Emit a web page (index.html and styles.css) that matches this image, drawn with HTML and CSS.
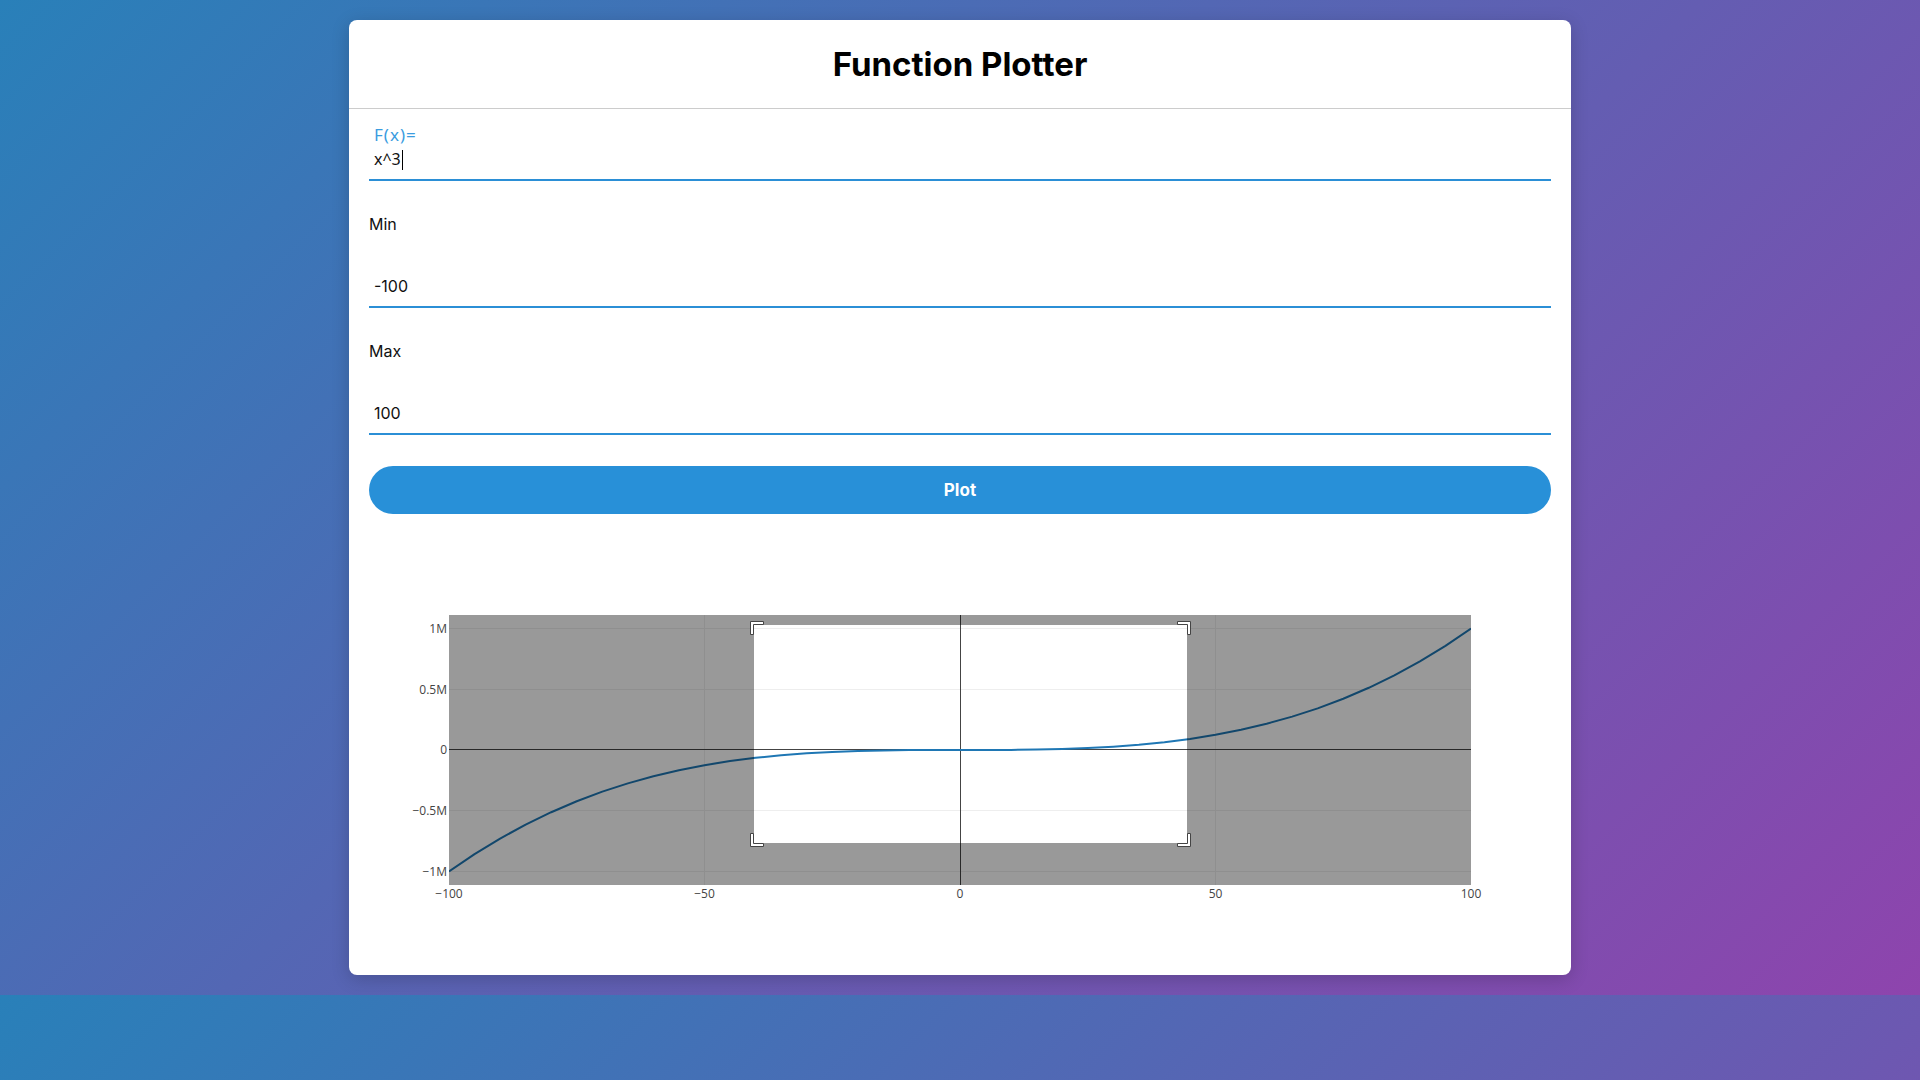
FILE: index.html
```html
<!DOCTYPE html>
<html lang="en">
<head>
<meta charset="utf-8">
<title>Function Plotter</title>
<link rel="stylesheet" href="styles.css">
</head>
<body>
<main class="card">
  <header class="card-header">
    <h1 class="title">Function Plotter</h1>
  </header>
  <section class="card-body">
    <div class="math-field">
      <div class="math-label">F(x)=</div>
      <div class="math-input">x^3<span class="caret"></span></div>
    </div>
    <div class="field">
      <label class="field-label" for="min">Min</label>
      <input class="field-input" id="min" type="text" value="-100">
    </div>
    <div class="field">
      <label class="field-label" for="max">Max</label>
      <input class="field-input" id="max" type="text" value="100">
    </div>
    <button class="plot-btn" type="button">Plot</button>
    <div class="chart">
      <svg class="plot" width="1182" height="450" viewBox="0 0 1182 450">
        <defs>
          <clipPath id="plotclip"><rect x="80" y="100" width="1022" height="270"/></clipPath>
        </defs>
        <rect x="80" y="100" width="1022" height="270" fill="#fff"/>
        <g class="grid" stroke="#eee" stroke-width="1" shape-rendering="crispEdges">
          <line x1="80" y1="113.5" x2="1102" y2="113.5"/>
          <line x1="80" y1="174.5" x2="1102" y2="174.5"/>
          <line x1="80" y1="295.5" x2="1102" y2="295.5"/>
          <line x1="80" y1="356.5" x2="1102" y2="356.5"/>
          <line x1="335.5" y1="100" x2="335.5" y2="370"/>
          <line x1="846.5" y1="100" x2="846.5" y2="370"/>
        </g>
        <g class="zero" stroke="#444" stroke-width="1" shape-rendering="crispEdges">
          <line x1="80" y1="234.5" x2="1102" y2="234.5"/>
          <line x1="591.5" y1="100" x2="591.5" y2="370"/>
        </g>
        <polyline clip-path="url(#plotclip)" fill="none" stroke="#1f77b4" stroke-width="2" stroke-linejoin="round"
          points="80,356.5 105.55,339.17 131.1,323.57 156.65,309.62 182.2,297.21 207.75,286.26 233.3,276.67 258.85,268.37 284.4,261.24 309.95,255.21 335.5,250.19 361.05,246.07 386.6,242.78 412.15,240.21 437.7,238.28 463.25,236.9 488.8,235.97 514.35,235.41 539.9,235.12 565.45,235.02 591,235 616.55,234.98 642.1,234.88 667.65,234.59 693.2,234.03 718.75,233.1 744.3,231.72 769.85,229.79 795.4,227.22 820.95,223.93 846.5,219.81 872.05,214.79 897.6,208.76 923.15,201.63 948.7,193.33 974.25,183.74 999.8,172.79 1025.35,160.38 1050.9,146.43 1076.45,130.83 1102,113.5"/>
        <path class="zoom-dim" fill="#000" fill-opacity="0.4" fill-rule="evenodd"
          d="M80,100H1102V370H80Z M385,110V328H818V110Z"/>
        <path class="zoom-corners" fill="#fff" stroke="#444" stroke-width="1"
          d="M381.5,119.5h3v-10h10v-3h-13Z M821.5,119.5h-3v-10h-10v-3h13Z M821.5,318.5h-3v10h-10v3h13Z M381.5,318.5h3v10h10v3h-13Z"/>
        <g class="ticks-y" font-family="'Open Sans', sans-serif" font-size="12" fill="#444" text-anchor="end">
          <text x="78" y="117.5">1M</text>
          <text x="78" y="178.5">0.5M</text>
          <text x="78" y="239">0</text>
          <text x="78" y="299.5">−0.5M</text>
          <text x="78" y="360.5">−1M</text>
        </g>
        <g class="ticks-x" font-family="'Open Sans', sans-serif" font-size="12" fill="#444" text-anchor="middle">
          <text x="80" y="383">−100</text>
          <text x="335.5" y="383">−50</text>
          <text x="591" y="383">0</text>
          <text x="846.5" y="383">50</text>
          <text x="1102" y="383">100</text>
        </g>
      </svg>
    </div>
  </section>
</main>
</body>
</html>
```

FILE: styles.css
```css
body {
  margin: 0;
  padding: 20px;
  background: linear-gradient(135deg, #2980b9, #8e44ad);
  font-family: "Inter", "Noto Sans", sans-serif;
  color: #111;
}

.card {
  width: 1222px;
  margin: 0 auto;
  background: #fff;
  border-radius: 8px;
  box-shadow: 0 4px 18px rgba(0, 0, 0, 0.18);
}

.card-header {
  padding: 20px;
  border-bottom: 1px solid #cccccc;
  text-align: center;
}

.title {
  margin: 0;
  font-size: 33px;
  line-height: 48px;
  font-weight: 700;
  color: #000;
}

.card-body {
  padding: 0 20px 10px;
}

.math-field {
  margin-top: 14px;
  padding: 0 5px 8px;
  border-bottom: 2px solid #2b8fd6;
  font-family: "Noto Sans", "Open Sans", sans-serif;
  font-size: 16px;
  line-height: 24px;
}

.math-label {
  color: #3a9ce0;
  font-size: 17px;
  letter-spacing: 1px;
}

.math-input {
  color: #111;
}

.caret {
  display: inline-block;
  width: 1px;
  height: 20px;
  margin-left: 1px;
  background: #000;
  vertical-align: -5px;
}

.field {
  margin-top: 31px;
}

.field-label {
  display: block;
  font-size: 16px;
  line-height: 24px;
  color: #111;
}

.field-input {
  display: block;
  width: 100%;
  box-sizing: border-box;
  margin-top: 28px;
  padding: 10px 5px 8px;
  border: none;
  border-bottom: 2px solid #2b8fd6;
  background: transparent;
  font-family: "Inter", "Noto Sans", sans-serif;
  font-size: 16px;
  line-height: 24px;
  color: #111;
  outline: none;
}

.plot-btn {
  display: block;
  width: 100%;
  height: 48px;
  margin-top: 31px;
  border: none;
  border-radius: 24px;
  background: #2890d8;
  color: #fff;
  font-family: "Inter", "Noto Sans", sans-serif;
  font-size: 17px;
  font-weight: 700;
  cursor: pointer;
}

.chart {
  margin-top: 1px;
}

.plot {
  display: block;
}
```
